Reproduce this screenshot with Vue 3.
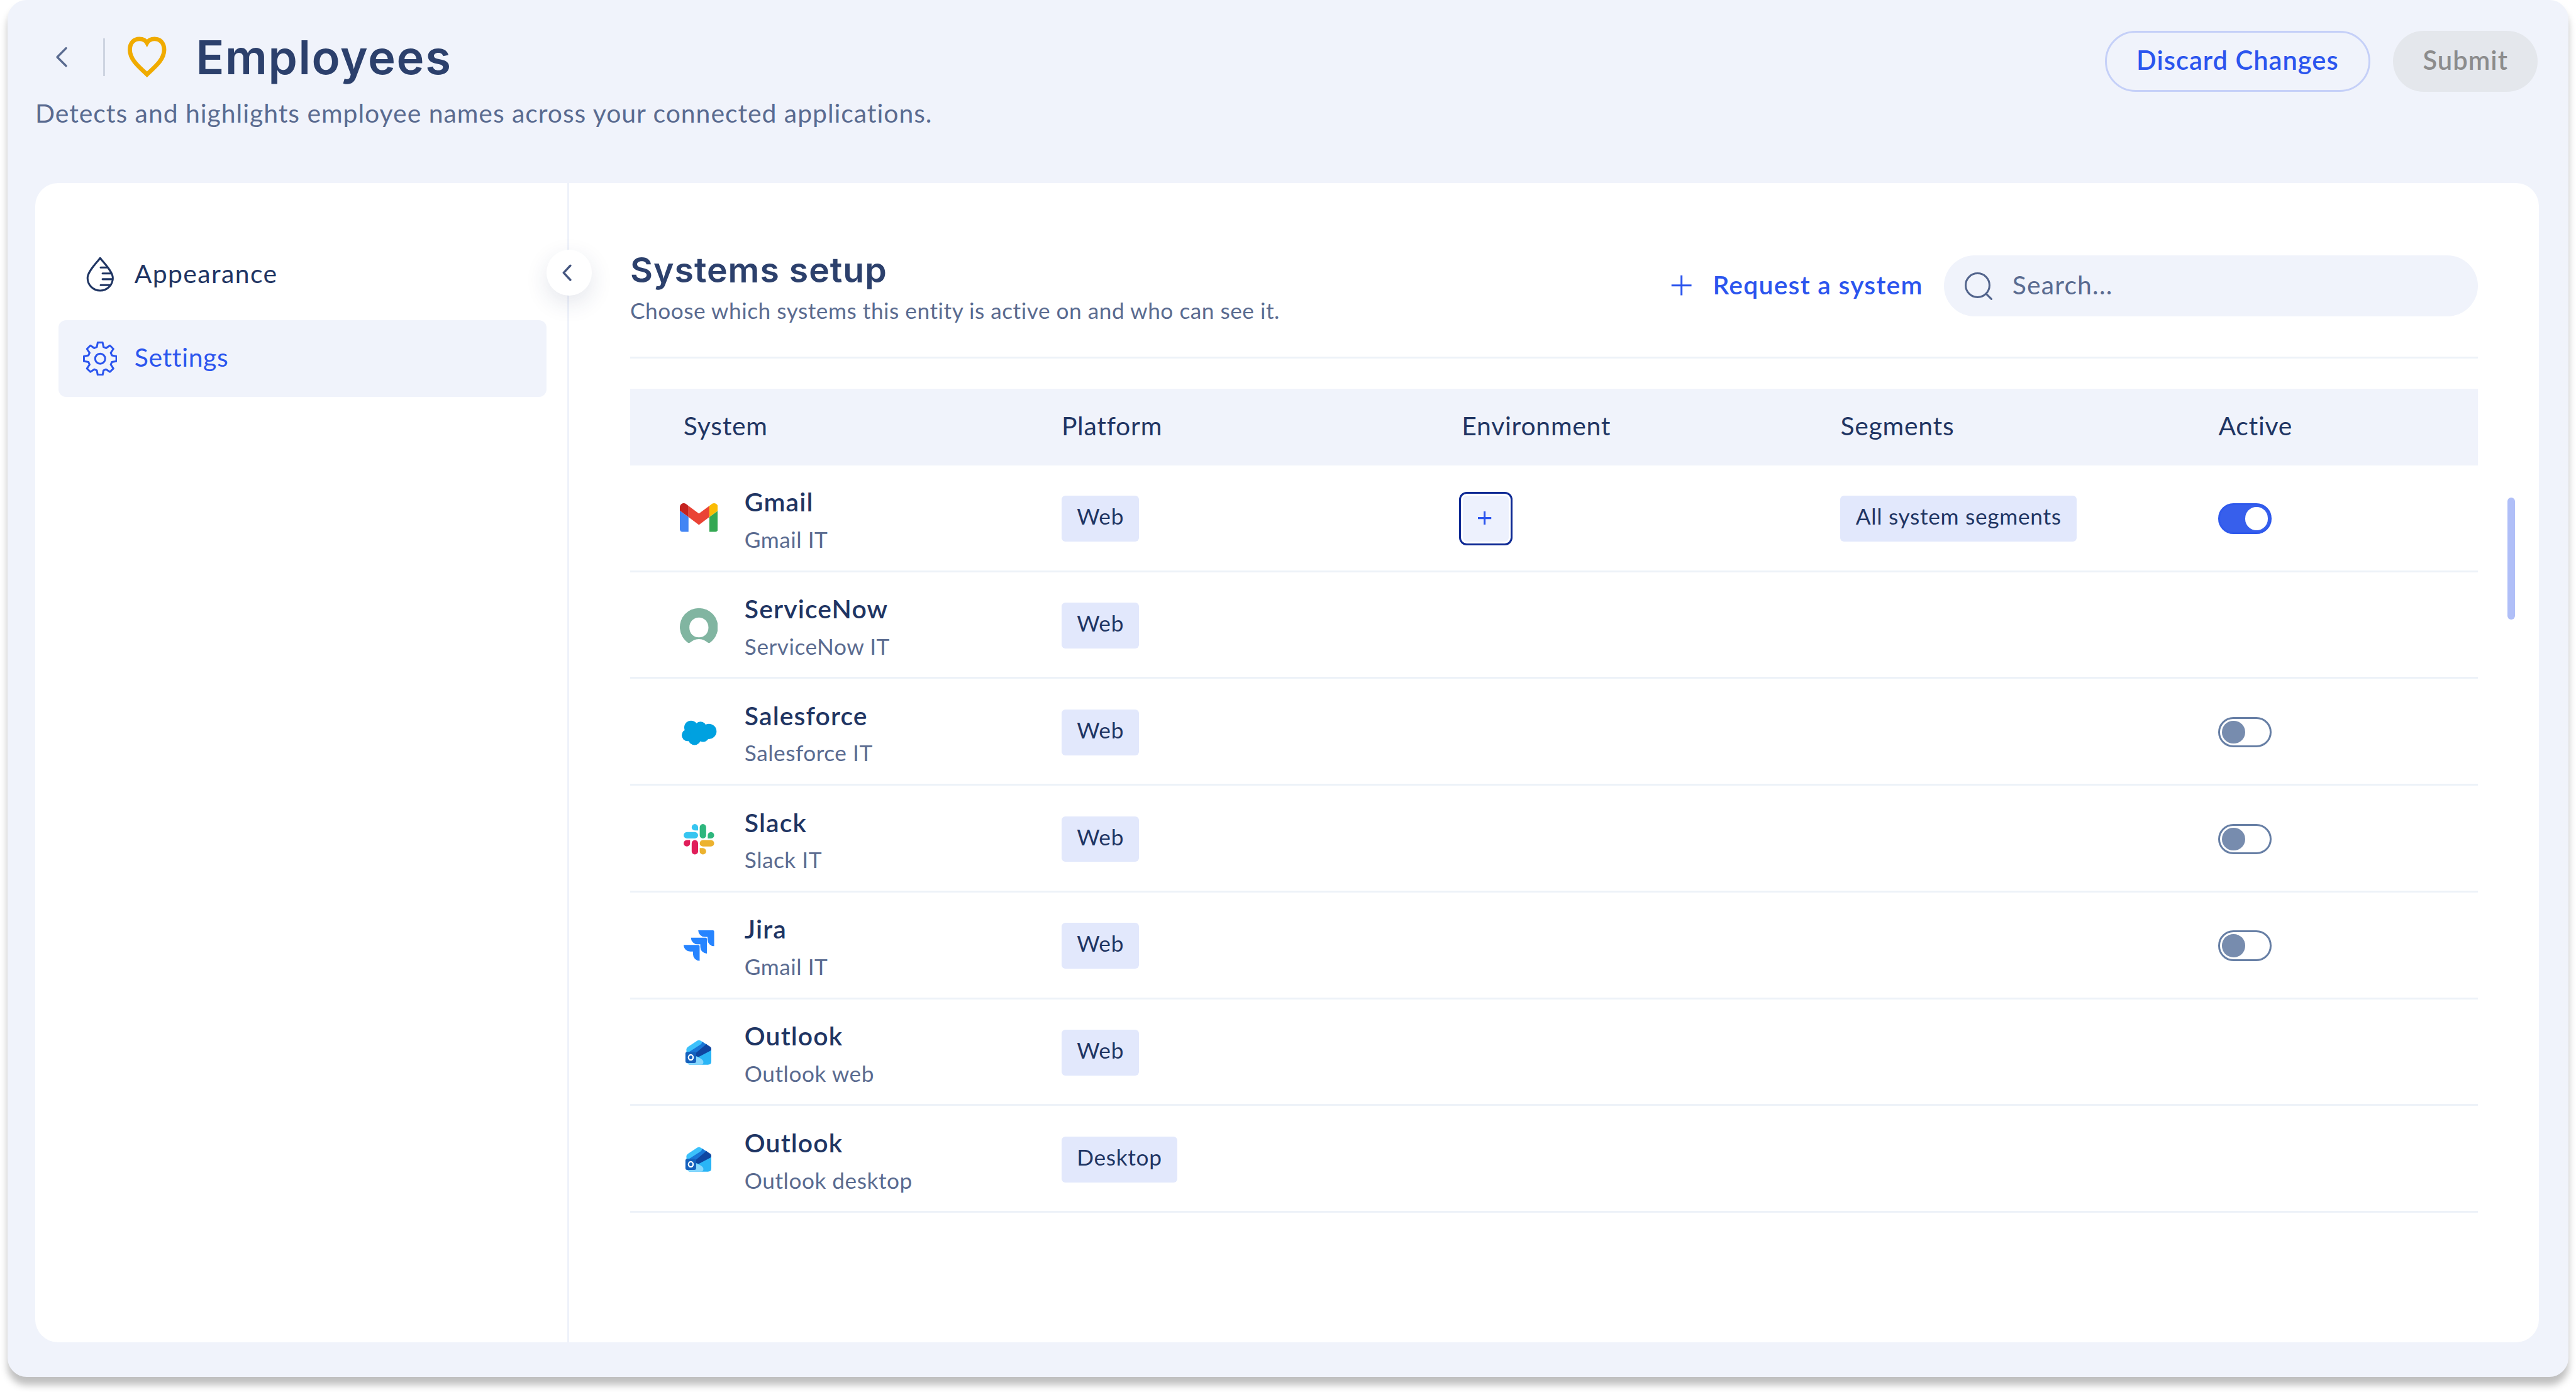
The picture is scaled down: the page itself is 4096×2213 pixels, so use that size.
<template>
  <div class="page">
    <div class="window">
      <header class="page-header">
        <div class="heading">
          <div class="title-row">
            <svg class="back-icon" viewBox="0 0 26 44">
              <path d="M22.5 3.5 4 22l18.500 18.500" fill="none" stroke="#5a6b90" stroke-width="4.500" stroke-linecap="round" stroke-linejoin="round" />
            </svg>
            <span class="title-divider"></span>
            <svg class="heart-icon" viewBox="0 0 88 88">
              <path d="M44.5 79.5C32 67 8.500 50 8.500 28C8.500 13 17.500 5 28.500 5C36 5 41.500 8 44.500 13.500C47.500 8 53 5 60.500 5C71.500 5 80.500 13 80.500 28C80.500 50 57 67 44.500 79.500Z" fill="none" stroke="#f0ab00" stroke-width="9" />
            </svg>
            <h1>Employees</h1>
          </div>
          <p class="description">Detects and highlights employee names across your connected applications.</p>
        </div>
        <div class="header-buttons">
          <button class="btn btn-outline">Discard Changes</button>
          <button class="btn btn-disabled">Submit</button>
        </div>
      </header>

      <div class="card">
        <aside class="sidebar">
          <div class="nav-item">
            <svg class="nav-icon" viewBox="0 0 72 72" fill="none" stroke="currentColor" stroke-width="4" stroke-linecap="round">
              <path d="M36 1.500C32 8 9.500 29 9.500 43.500A26.500 26.500 0 0 0 62.500 43.500C62.500 29 40 8 36 1.500Z" stroke-linejoin="round" />
              <path d="M37 21.500h13M41 34h18.500M41 46h21M37 58.500h20" />
            </svg>
            <span>Appearance</span>
          </div>
          <div class="nav-item active">
            <svg class="nav-icon" viewBox="0 0 72 72" fill="none" stroke="currentColor" stroke-width="4" stroke-linejoin="round">
              <path :d="gearPath" />
              <circle cx="36" cy="36" r="10.500" />
            </svg>
            <span>Settings</span>
          </div>
          <button class="collapse">
            <svg viewBox="0 0 20 36">
              <path d="M17 3 3 18l14 15" fill="none" stroke="#44557f" stroke-width="4.500" stroke-linecap="round" stroke-linejoin="round" />
            </svg>
          </button>
        </aside>

        <main class="content">
          <div class="section-head">
            <div>
              <h2>Systems setup</h2>
              <p class="subtitle">Choose which systems this entity is active on and who can see it.</p>
            </div>
            <div class="actions">
              <div class="request">
                <svg viewBox="0 0 44 44"><path d="M22 1v42M1 22h42" stroke="#2b55ee" stroke-width="4" /></svg>
                <span>Request a system</span>
              </div>
              <div class="search">
                <svg viewBox="0 0 58 58" fill="none" stroke="#52648c" stroke-width="4">
                  <circle cx="27" cy="27" r="25" />
                  <path d="M45 45l11 11" stroke-linecap="round" />
                </svg>
                <span>Search...</span>
              </div>
            </div>
          </div>

          <div class="table">
            <div class="table-header">
              <span v-for="column in columns" :key="column">{{ column }}</span>
            </div>
            <div v-for="system in systems" :key="system.id" class="table-row">
              <div class="system-cell">
                <svg v-if="system.logo === 'gmail'" class="logo" viewBox="52 33.2 88 88">
                  <path fill="#4285f4" d="M58 108h14V74L52 59v43c0 3.320 2.690 6 6 6" />
                  <path fill="#34a853" d="M120 108h14c3.320 0 6-2.690 6-6V59l-20 15" />
                  <path fill="#fbbc04" d="M120 48v26l20-15v-8c0-7.420-8.470-11.650-14.400-7.200" />
                  <path fill="#ea4335" d="M72 74V48l24 18 24-18v26L96 92" />
                  <path fill="#c5221f" d="M52 51v8l20 15V48l-5.600-4.200c-5.940-4.450-14.400-.22-14.400 7.200" />
                </svg>
                <svg v-else-if="system.logo === 'servicenow'" class="logo" viewBox="0 0 80 80">
                  <path fill="#81b5a1" fill-rule="evenodd" d="M16 75.500A40 40 0 1 1 64 75.500Q61.500 78 58.500 76Q50 68.500 40 68.500Q30 68.500 21.500 76Q18.500 78 16 75.500ZM40 23.500C28.500 23.500 20 32.500 20 44.500C20 56.500 28.500 65 40 65C51.500 65 60 56.500 60 44.500C60 32.500 51.500 23.500 40 23.500Z" />
                </svg>
                <svg v-else-if="system.logo === 'salesforce'" class="logo" viewBox="0 0 80 80" fill="#00a1e0">
                  <circle cx="23.5" cy="29.7" r="14.3" />
                  <circle cx="43.4" cy="30" r="12.5" />
                  <circle cx="61" cy="38" r="16" />
                  <circle cx="16.3" cy="46" r="12.4" />
                  <circle cx="30.8" cy="52.800" r="13.700" />
                  <circle cx="48.8" cy="47" r="13" />
                  <circle cx="36" cy="42" r="14" />
                </svg>
                <svg v-else-if="system.logo === 'slack'" class="logo" viewBox="-3 -3 30 30">
                  <path fill="#e01e5a" d="M5.042 15.165a2.528 2.528 0 0 1-2.520 2.523A2.528 2.528 0 0 1 0 15.165a2.527 2.527 0 0 1 2.522-2.520h2.520v2.520zM6.313 15.165a2.527 2.527 0 0 1 2.521-2.520 2.527 2.527 0 0 1 2.521 2.520v6.313A2.528 2.528 0 0 1 8.834 24a2.528 2.528 0 0 1-2.521-2.522v-6.313z" />
                  <path fill="#36c5f0" d="M8.834 5.042a2.528 2.528 0 0 1-2.521-2.520A2.528 2.528 0 0 1 8.834 0a2.528 2.528 0 0 1 2.521 2.522v2.520H8.834zM8.834 6.313a2.528 2.528 0 0 1 2.521 2.521 2.528 2.528 0 0 1-2.521 2.521H2.522A2.528 2.528 0 0 1 0 8.834a2.528 2.528 0 0 1 2.522-2.521h6.312z" />
                  <path fill="#2eb67d" d="M18.956 8.834a2.528 2.528 0 0 1 2.522-2.521A2.528 2.528 0 0 1 24 8.834a2.528 2.528 0 0 1-2.522 2.521h-2.522V8.834zM17.688 8.834a2.528 2.528 0 0 1-2.523 2.521 2.527 2.527 0 0 1-2.520-2.521V2.522A2.527 2.527 0 0 1 15.165 0a2.528 2.528 0 0 1 2.523 2.522v6.312z" />
                  <path fill="#ecb22e" d="M15.165 18.956a2.528 2.528 0 0 1 2.523 2.522A2.528 2.528 0 0 1 15.165 24a2.527 2.527 0 0 1-2.520-2.522v-2.522h2.520zM15.165 17.688a2.527 2.527 0 0 1-2.520-2.523 2.526 2.526 0 0 1 2.520-2.520h6.313A2.527 2.527 0 0 1 24 15.165a2.528 2.528 0 0 1-2.522 2.523h-6.313z" />
                </svg>
                <svg v-else-if="system.logo === 'jira'" class="logo" viewBox="-3 -3 30 30">
                  <path fill="#2684ff" d="M11.571 11.513H0a5.218 5.218 0 0 0 5.232 5.215h2.130v2.057A5.215 5.215 0 0 0 12.575 24V12.518a1.005 1.005 0 0 0-1.005-1.005zm5.723-5.756H5.736a5.215 5.215 0 0 0 5.215 5.214h2.129v2.058a5.218 5.218 0 0 0 5.215 5.214V6.758a1.001 1.001 0 0 0-1.001-1.001zM23.013 0H11.455a5.215 5.215 0 0 0 5.215 5.215h2.129v2.057A5.215 5.215 0 0 0 24 12.483V1.005A1.001 1.001 0 0 0 23.013 0Z" />
                </svg>
                <svg v-else class="logo" viewBox="0 0 80 80">
                  <path fill="#2ab5f6" d="M14 32L40 14L66 32V59Q66 65.500 59 65.500H22Q16 65.500 16 60Z" />
                  <path fill="#3cc1fb" d="M14 42V33Q14 30 17 28L36 15.500Q40 13 44 15.500L50 19L24 40Z" />
                  <path fill="#1976d6" d="M18 39.500L43.500 23Q47 20.500 46 16.700L58 24L36 48Z" />
                  <path fill="#0f46a1" d="M34 40.500L55.500 22.500L64 28Q66 30 66 32.500Q66 35 63.500 36.500L39 49.500L33 47Z" />
                  <path fill="#86d7fd" d="M30 47L38 49.500Q49.500 55 49.500 60Q49.500 65.500 43 65.500H23Q17 65.500 16 61Z" />
                  <rect x="11.700" y="38.500" width="22.500" height="23.500" rx="4" fill="#1561bd" />
                  <ellipse cx="23" cy="50.200" rx="4.800" ry="5.400" fill="none" stroke="#fff" stroke-width="3" />
                </svg>
                <div class="system-names">
                  <div class="system-name">{{ system.name }}</div>
                  <div class="system-detail">{{ system.detail }}</div>
                </div>
              </div>
              <div><span class="tag">{{ system.platform }}</span></div>
              <div>
                <button v-if="system.canAddEnvironment" class="add-button">
                  <svg viewBox="0 0 28 28"><path d="M14 0v28M0 14h28" stroke="#2b55ee" stroke-width="4" /></svg>
                </button>
              </div>
              <div><span v-if="system.segments" class="tag">{{ system.segments }}</span></div>
              <div>
                <span
                  v-if="system.active !== null"
                  :class="['toggle', { on: system.active }]"
                  @click="system.active = !system.active"
                ></span>
              </div>
            </div>
          </div>
          <span class="scrollbar"></span>
        </main>
      </div>
    </div>
  </div>
</template>

<script setup>
import { ref } from 'vue'

const columns = ['System', 'Platform', 'Environment', 'Segments', 'Active']

const systems = ref([
  { id: 1, logo: 'gmail', name: 'Gmail', detail: 'Gmail IT', platform: 'Web', canAddEnvironment: true, segments: 'All system segments', active: true },
  { id: 2, logo: 'servicenow', name: 'ServiceNow', detail: 'ServiceNow IT', platform: 'Web', active: null },
  { id: 3, logo: 'salesforce', name: 'Salesforce', detail: 'Salesforce IT', platform: 'Web', active: false },
  { id: 4, logo: 'slack', name: 'Slack', detail: 'Slack IT', platform: 'Web', active: false },
  { id: 5, logo: 'jira', name: 'Jira', detail: 'Gmail IT', platform: 'Web', active: false },
  { id: 6, logo: 'outlook', name: 'Outlook', detail: 'Outlook web', platform: 'Web', active: null },
  { id: 7, logo: 'outlook', name: 'Outlook', detail: 'Outlook desktop', platform: 'Desktop', active: null }
])

// eight-tooth gear: [angle offset, radius] for every tooth
const tooth = [[-16, 25.5], [-8.5, 34.5], [8.5, 34.5], [16, 25.5]]
const points = []
for (let i = 0; i < 8; i++) {
  for (const [offset, radius] of tooth) {
    const angle = ((i * 45 + offset) * Math.PI) / 180
    points.push(`${(36 + radius * Math.sin(angle)).toFixed(2)} ${(36 - radius * Math.cos(angle)).toFixed(2)}`)
  }
}
const gearPath = `M${points.join('L')}Z`
</script>

<style>
/* 1rem = 10 design pixels */
html {
  font-size: 30.318px;
  background: #fff;
}
</style>

<style scoped>
* {
  box-sizing: border-box;
}

svg {
  display: block;
  flex: none;
}

h1, h2, p {
  margin: 0;
}

button {
  padding: 0;
  border: none;
  font: inherit;
  letter-spacing: inherit;
}

.page {
  height: 100vh;
  padding: 0 0.4rem;
  overflow: hidden;
}

.window {
  height: 72.2rem;
  background: #f0f3fb;
  border-radius: 1rem;
  box-shadow: 0 0.4rem 0.4rem rgba(0, 0, 0, 0.25);
  font-family: Lato, "Open Sans", sans-serif;
  color: #1f3563;
  white-space: nowrap;
}

.page-header {
  display: flex;
  justify-content: space-between;
  height: 9.6rem;
  padding: 1.25rem 1.6rem 0 1.45rem;
}

.title-row {
  display: flex;
  align-items: center;
  height: 3.5rem;
}

.back-icon {
  width: 0.65rem;
  height: 1.1rem;
  margin-left: 1.05rem;
}

.title-divider {
  width: 0.1rem;
  height: 2rem;
  margin-left: 1.85rem;
  background: #ced4e1;
}

.heart-icon {
  width: 2.2rem;
  height: 2.2rem;
  margin-left: 1.1rem;
}

h1 {
  margin-left: 1.475rem;
  font: 600 2.45rem/3.5rem Inter, sans-serif;
  letter-spacing: 0.022em;
  color: #2c406c;
}

.description {
  font-size: 1.35rem;
  line-height: 2.35rem;
  letter-spacing: 0.0235em;
  color: #5a6b90;
}

.header-buttons {
  display: flex;
  gap: 1.2rem;
  padding-top: 0.35rem;
}

.btn {
  height: 3.2rem;
  padding-bottom: 0.1rem;
  border-radius: 1.6rem;
  font-size: 1.375rem;
  font-weight: 600;
  letter-spacing: 0.024em;
}

.btn-outline {
  width: 13.9rem;
  border: 0.125rem solid #c5d0f8;
  background: transparent;
  color: #2b55ee;
}

.btn-disabled {
  width: 7.6rem;
  background: #e4e7ec;
  color: #8c8c8c;
}

.card {
  display: flex;
  height: 60.8rem;
  margin: 0 1.55rem 0 1.45rem;
  background: #fff;
  border-radius: 1.2rem;
}

.sidebar {
  position: relative;
  display: flex;
  flex-direction: column;
  gap: 0.4rem;
  width: 28rem;
  padding: 2.8rem 1.1rem 0 1.225rem;
  border-right: 0.1rem solid #eef2fa;
}

.nav-item {
  display: flex;
  align-items: center;
  gap: 0.9rem;
  height: 4rem;
  padding-left: 1.275rem;
  border-radius: 0.4rem;
  font-size: 1.35rem;
  letter-spacing: 0.034em;
}

.nav-item span {
  padding-bottom: 0.15rem;
}

.nav-item.active {
  background: #f0f3fb;
  color: #2b55ee;
  letter-spacing: 0.016em;
}

.nav-icon {
  width: 1.8rem;
  height: 1.8rem;
}

.collapse {
  position: absolute;
  top: 3.5rem;
  right: -1.3rem;
  display: flex;
  align-items: center;
  width: 2.4rem;
  height: 2.4rem;
  padding-left: 0.85rem;
  background: #fff;
  border-radius: 50%;
  box-shadow: 0 0.4rem 1.2rem rgba(31, 53, 99, 0.12);
}

.collapse svg {
  width: 0.5rem;
  height: 0.9rem;
}

.content {
  position: relative;
  flex: 1;
  padding: 3.3rem 3.2rem 0;
}

.section-head {
  display: flex;
  justify-content: space-between;
  height: 5.9rem;
  border-bottom: 0.1rem solid #edf2f8;
}

h2 {
  font: 600 1.825rem/2.5rem Inter, sans-serif;
  letter-spacing: 0.018em;
  color: #2c406c;
}

.subtitle {
  font-size: 1.1625rem;
  line-height: 1.8rem;
  letter-spacing: 0.0145em;
  color: #5a6b90;
}

.actions {
  display: flex;
  gap: 1.1rem;
  height: 3.2rem;
  margin-top: 0.5rem;
}

.request {
  display: flex;
  align-items: center;
  gap: 1.075rem;
  font-size: 1.35rem;
  font-weight: 600;
  letter-spacing: 0.03em;
  color: #2b55ee;
}

.request span {
  padding-bottom: 0.15rem;
}

.request svg {
  width: 1.1rem;
  height: 1.1rem;
  margin-bottom: 0.1rem;
}

.search {
  display: flex;
  align-items: center;
  gap: 1.04rem;
  width: 28rem;
  padding-left: 1.1rem;
  background: #f0f3fb;
  border-radius: 1.6rem;
  font-size: 1.35rem;
  letter-spacing: 0.028em;
  color: #5a6b90;
}

.search svg {
  width: 1.45rem;
  height: 1.45rem;
}

.search span {
  padding-bottom: 0.15rem;
}

.table {
  margin-top: 1.6rem;
}

.table-header,
.table-row {
  display: grid;
  grid-template-columns: 22.625rem 20.85rem 20rem 19.825rem 1fr;
  align-items: center;
}

.table-header {
  height: 4rem;
  padding-bottom: 0.17rem;
  background: #f0f3fb;
  font-size: 1.35rem;
  letter-spacing: 0.018em;
}

.table-header span:first-child {
  padding-left: 2.8rem;
}

.table-header span:nth-child(3) {
  padding-left: 0.14rem;
}

.table-row {
  height: 5.6rem;
  padding-top: 0.1rem;
  border-bottom: 0.1rem solid #edf2f8;
}

.table-row > div {
  display: flex;
  align-items: center;
}

.system-cell {
  gap: 1.4rem;
  padding-left: 2.6rem;
}

.logo {
  width: 2rem;
  height: 2rem;
}

.system-names {
  padding-top: 0.3rem;
}

.system-name {
  font-size: 1.35rem;
  font-weight: 600;
  line-height: 1.9rem;
  letter-spacing: 0.027em;
}

.system-detail {
  font-size: 1.1625rem;
  line-height: 2.05rem;
  letter-spacing: 0.0145em;
  color: #5a6b90;
}

.tag {
  height: 2.4rem;
  padding: 0 0.8rem;
  background: #e2e8fc;
  border-radius: 0.2rem;
  font-size: 1.1625rem;
  line-height: 2.2rem;
  letter-spacing: 0.02em;
}

.add-button {
  display: flex;
  align-items: center;
  justify-content: center;
  width: 2.8rem;
  height: 2.8rem;
  border: 0.1rem solid #0f2a94;
  border-radius: 0.4rem;
  background: #edf1fd;
  box-shadow: inset 0 0 0 0.1rem #fff;
}

.add-button svg {
  width: 0.7rem;
  height: 0.7rem;
  margin: 0 0.1rem 0.1rem 0;
}

.toggle {
  width: 2.8rem;
  height: 1.6rem;
  padding: 0.1rem;
  border: 0.1rem solid #677fa5;
  border-radius: 0.8rem;
}

.toggle::before {
  content: "";
  display: block;
  width: 1.2rem;
  height: 1.2rem;
  border-radius: 50%;
  background: #778cae;
}

.toggle.on {
  border-color: #2f59ec;
  background: #375fec;
}

.toggle.on::before {
  margin-left: auto;
  background: #fff;
}

.scrollbar {
  position: absolute;
  top: 16.5rem;
  right: 1.25rem;
  width: 0.4rem;
  height: 6.4rem;
  border-radius: 0.2rem;
  background: #b0bff8;
}
</style>
